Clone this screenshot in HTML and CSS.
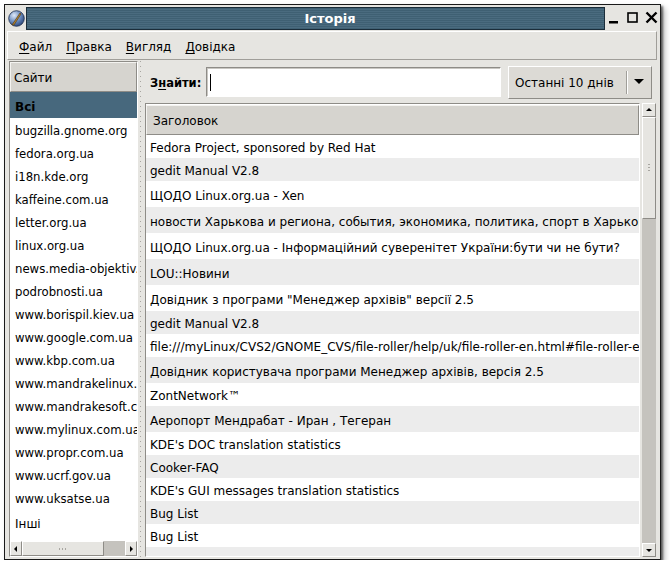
FILE: index.html
```html
<!DOCTYPE html>
<html lang="uk">
<head>
<meta charset="utf-8">
<title>Історія</title>
<link rel="stylesheet" href="styles.css">
</head>
<body>
<div class="window">
  <div class="titlebar">
    <div class="app-icon">
      <svg width="17" height="17" viewBox="0 0 17 17">
        <defs>
          <radialGradient id="g" cx="0.35" cy="0.3" r="0.8">
            <stop offset="0" stop-color="#dfe9f7"/>
            <stop offset="0.5" stop-color="#6f8fc2"/>
            <stop offset="1" stop-color="#1f3a6e"/>
          </radialGradient>
        </defs>
        <circle cx="8.5" cy="8.5" r="7.8" fill="url(#g)" stroke="#1d2c4a" stroke-width="0.8"/>
        <path d="M4 15 L12 3 L13 4 L6 15 Z" fill="#b8862e" stroke="#4a3410" stroke-width="0.6"/>
      </svg>
    </div>
    <div class="title-strip"><span class="title-text">Історія</span></div>
    <div class="wm-buttons">
      <svg width="12" height="14" viewBox="0 0 12 14"><rect x="1" y="10" width="9" height="2.5" fill="#000"/></svg>
      <svg width="13" height="14" viewBox="0 0 13 14"><rect x="2" y="2" width="9" height="9" fill="none" stroke="#000" stroke-width="1.6"/></svg>
      <svg width="13" height="14" viewBox="0 0 13 14"><path d="M1.5 1.5 L11.5 11.5 M11.5 1.5 L1.5 11.5" stroke="#000" stroke-width="2.4"/></svg>
    </div>
  </div>
  <div class="client">
    <div class="menubar">
      <span class="menu-item"><u>Ф</u>айл</span>
      <span class="menu-item"><u>П</u>равка</span>
      <span class="menu-item"><u>В</u>игляд</span>
      <span class="menu-item"><u>Д</u>овідка</span>
    </div>
    <div class="main">
      <div class="sidebar">
        <div class="side-list">
          <div class="col-header side-header">Сайти</div>
          <div class="side-item cy selected">Всі</div>
          <div class="side-item">bugzilla.gnome.org</div>
          <div class="side-item">fedora.org.ua</div>
          <div class="side-item">i18n.kde.org</div>
          <div class="side-item">kaffeine.com.ua</div>
          <div class="side-item">letter.org.ua</div>
          <div class="side-item">linux.org.ua</div>
          <div class="side-item">news.media-objektiv.com</div>
          <div class="side-item">podrobnosti.ua</div>
          <div class="side-item">www.borispil.kiev.ua</div>
          <div class="side-item">www.google.com.ua</div>
          <div class="side-item">www.kbp.com.ua</div>
          <div class="side-item">www.mandrakelinux.com</div>
          <div class="side-item">www.mandrakesoft.com</div>
          <div class="side-item">www.mylinux.com.ua</div>
          <div class="side-item">www.propr.com.ua</div>
          <div class="side-item">www.ucrf.gov.ua</div>
          <div class="side-item">www.uksatse.ua</div>
          <div class="side-item cy">Інші</div>
        </div>
        <div class="hscroll">
          <div class="sb-btn"><svg width="10" height="10" viewBox="0 0 10 10"><path d="M6 2 L3 5 L6 8 Z" fill="#000"/></svg></div>
          <div class="hslider"><span class="grip-h"></span></div>
          <div class="trough"></div>
          <div class="sb-btn"><svg width="10" height="10" viewBox="0 0 10 10"><path d="M4 2 L7 5 L4 8 Z" fill="#000"/></svg></div>
        </div>
      </div>
      <div class="handle"></div>
      <div class="content">
        <div class="searchbar">
          <label class="search-label">З<u>н</u>айти:</label>
          <div class="entry"><span class="caret"></span></div>
          <div class="combo">
            <span class="combo-text">Останні 10 днів</span>
            <span class="combo-sep"></span>
            <svg class="combo-arrow" width="12" height="10" viewBox="0 0 12 10"><path d="M1 2 L11 2 L6 7 Z" fill="#000"/></svg>
          </div>
        </div>
        <div class="tree-wrap">
          <div class="tree">
            <div class="col-header tree-header">Заголовок</div>
            <div class="row">Fedora Project, sponsored by Red Hat</div>
            <div class="row alt">gedit Manual V2.8</div>
            <div class="row cy">ЩОДО Linux.org.ua - Xen</div>
            <div class="row cy alt">новости Харькова и региона, события, экономика, политика, спорт в Харькове</div>
            <div class="row cy">ЩОДО Linux.org.ua - Інформаційний суверенітет України:бути чи не бути?</div>
            <div class="row cy alt">LOU::Новини</div>
            <div class="row cy">Довідник з програми "Менеджер архівів" версії 2.5</div>
            <div class="row alt">gedit Manual V2.8</div>
            <div class="row">file:///myLinux/CVS2/GNOME_CVS/file-roller/help/uk/file-roller-en.html#file-roller-extract</div>
            <div class="row cy alt">Довідник користувача програми Менеджер архівів, версія 2.5</div>
            <div class="row">ZontNetwork™</div>
            <div class="row cy alt">Аеропорт Мендрабат - Иран , Тегеран</div>
            <div class="row">KDE's DOC translation statistics</div>
            <div class="row alt">Cooker-FAQ</div>
            <div class="row">KDE's GUI messages translation statistics</div>
            <div class="row alt">Bug List</div>
            <div class="row">Bug List</div>
            <div class="row alt"></div>
          </div>
          <div class="vscroll">
            <div class="sb-btn v"><svg width="10" height="10" viewBox="0 0 10 10"><path d="M2 6 L5 3 L8 6 Z" fill="#000"/></svg></div>
            <div class="vslider"><span class="grip-v"></span></div>
            <div class="trough"></div>
            <div class="sb-btn v"><svg width="10" height="10" viewBox="0 0 10 10"><path d="M2 4 L8 4 L5 7 Z" fill="#000"/></svg></div>
          </div>
        </div>
      </div>
    </div>
  </div>
</div>
</body>
</html>
```
FILE: styles.css
```css
* { box-sizing: border-box; }
body {
  margin: 0;
  background: #ffffff;
  font-family: "DejaVu Sans", sans-serif;
  font-size: 12px;
  color: #000;
}
u { text-decoration: underline; text-underline-offset: 2px; }

.window {
  margin: 4px 0 0 4px;
  width: 657px;
  height: 556px;
  border: 1px solid #1a1a1a;
  background: #e6e5e1;
  box-shadow: 2px 2px 2px rgba(0,0,0,0.55), 4px 4px 6px rgba(0,0,0,0.25);
  display: flex;
  flex-direction: column;
}

/* title bar */
.titlebar {
  height: 26px;
  display: flex;
  align-items: flex-start;
  padding-top: 2px;
  flex: none;
}
.app-icon { width: 21px; height: 23px; padding: 3px 0 0 3px; }
.title-strip {
  width: 579px;
  height: 23px;
  border: 1px solid #1b2d3a;
  background: repeating-linear-gradient(to bottom, #3f6073 0 1px, #4a6b7f 1px 2px);
  display: flex;
  align-items: center;
  justify-content: center;
}
.title-text {
  color: #fff;
  font-weight: bold;
  font-size: 13px;
  margin-left: 29px;
}
.wm-buttons {
  display: flex;
  gap: 6px;
  padding: 4px 0 0 3px;
}

/* client */
.client {
  flex: 1;
  display: flex;
  flex-direction: column;
  padding: 0 3px 2px 2px;
  min-height: 0;
}
.menubar {
  height: 29px;
  flex: none;
  display: flex;
  align-items: center;
  padding: 2px 0 0 4px;
  border: 1px solid;
  border-color: #ffffff #a09e99 #a09e99 #ffffff;
}
.menu-item { padding: 0 7px; }

.main {
  flex: 1;
  display: flex;
  min-height: 0;
  padding-top: 1px;
}

/* sidebar */
.sidebar {
  width: 129px;
  margin-left: 2px;
  display: flex;
  flex-direction: column;
  border: 1px solid;
  border-color: #8e8c87 #ffffff #ffffff #8e8c87;
  background: #fff;
}
.side-list {
  flex: 1;
  overflow: hidden;
  white-space: nowrap;
}
.col-header {
  height: 30px;
  display: flex;
  align-items: center;
  padding-top: 2px;
  background: #d6d4cf;
  border: 1px solid;
  border-color: #f4f3f0 #8e8c87 #8e8c87 #f4f3f0;
}
.side-header { padding-left: 3px; }
.side-item {
  height: 23px;
  display: flex;
  align-items: center;
  padding: 2px 0 0 5px;
  font-size: 11.7px;
}
.side-item.cy { height: 26px; padding-top: 3px; font-size: 12px; }
.side-item.selected {
  background: #47687d;
  font-weight: bold;
  color: #000;
}

.hscroll {
  height: 15px;
  flex: none;
  display: flex;
  background: #c5c3be;
}
.sb-btn {
  width: 12px;
  height: 15px;
  background: #e6e5e1;
  border: 1px solid;
  border-color: #ffffff #8e8c87 #8e8c87 #ffffff;
  display: flex;
  align-items: center;
  justify-content: center;
  flex: none;
}
.sb-btn.v { width: 14px; height: 14px; }
.hslider {
  width: 82px;
  background: #e6e5e1;
  border: 1px solid;
  border-color: #ffffff #8e8c87 #8e8c87 #ffffff;
  display: flex;
  align-items: center;
  justify-content: center;
}
.grip-h {
  width: 9px;
  height: 2px;
  background: repeating-linear-gradient(to right, #a8a6a1 0 1px, transparent 1px 3px);
}
.trough { flex: 1; background: #c5c3be; }

.handle {
  width: 7px;
  flex: none;
  background:
    repeating-linear-gradient(to bottom, #a8a6a1 0 1px, transparent 1px 5px) 2px 0 / 1px 100% no-repeat;
}

/* content */
.content {
  flex: 1;
  display: flex;
  flex-direction: column;
  min-width: 0;
}
.searchbar {
  height: 42px;
  flex: none;
  display: flex;
  align-items: center;
  padding-left: 5px;
}
.search-label {
  width: 56px;
  flex: none;
  font-weight: bold;
  font-size: 11.5px;
  padding-top: 2px;
}
.entry {
  width: 295px;
  height: 30px;
  flex: none;
  background: #fff;
  border: 1px solid;
  border-color: #8e8c87 #ffffff #ffffff #8e8c87;
  box-shadow: inset 1px 1px 0 #c9c7c2;
  display: flex;
  align-items: center;
  padding-left: 3px;
}
.caret { width: 1px; height: 17px; background: #000; }
.combo {
  width: 144px;
  height: 33px;
  flex: none;
  margin-left: 7px;
  background: #dcdad5;
  border: 1px solid;
  border-color: #ffffff #8e8c87 #8e8c87 #ffffff;
  display: flex;
  align-items: center;
  padding-left: 6px;
}
.combo-text { flex: 1; padding-top: 2px; }
.combo-sep {
  width: 2px;
  height: 23px;
  border-left: 1px solid #a09e99;
  border-right: 1px solid #ffffff;
  margin-right: 5px;
}
.combo-arrow { margin-right: 6px; }

.tree-wrap {
  flex: 1;
  display: flex;
  min-height: 0;
}
.tree {
  width: 495px;
  flex: none;
  border: 1px solid;
  border-color: #8e8c87 #ffffff #ffffff #8e8c87;
  background: #fff;
  overflow: hidden;
  white-space: nowrap;
  padding-top: 1px;
}
.tree-header { padding-left: 6px; }
.row {
  height: 23px;
  display: flex;
  align-items: center;
  padding: 2px 0 0 4px;
  background: #fff;
}
.row.cy { height: 26px; padding-top: 3px; }
.row.alt { background: #ececec; }

.vscroll {
  width: 14px;
  flex: none;
  margin-left: 2px;
  display: flex;
  flex-direction: column;
  background: #c5c3be;
}
.vslider {
  height: 102px;
  background: #e6e5e1;
  border: 1px solid;
  border-color: #ffffff #8e8c87 #8e8c87 #ffffff;
  display: flex;
  align-items: center;
  justify-content: center;
}
.grip-v {
  width: 2px;
  height: 9px;
  background: repeating-linear-gradient(to bottom, #a8a6a1 0 1px, transparent 1px 3px);
}
```
